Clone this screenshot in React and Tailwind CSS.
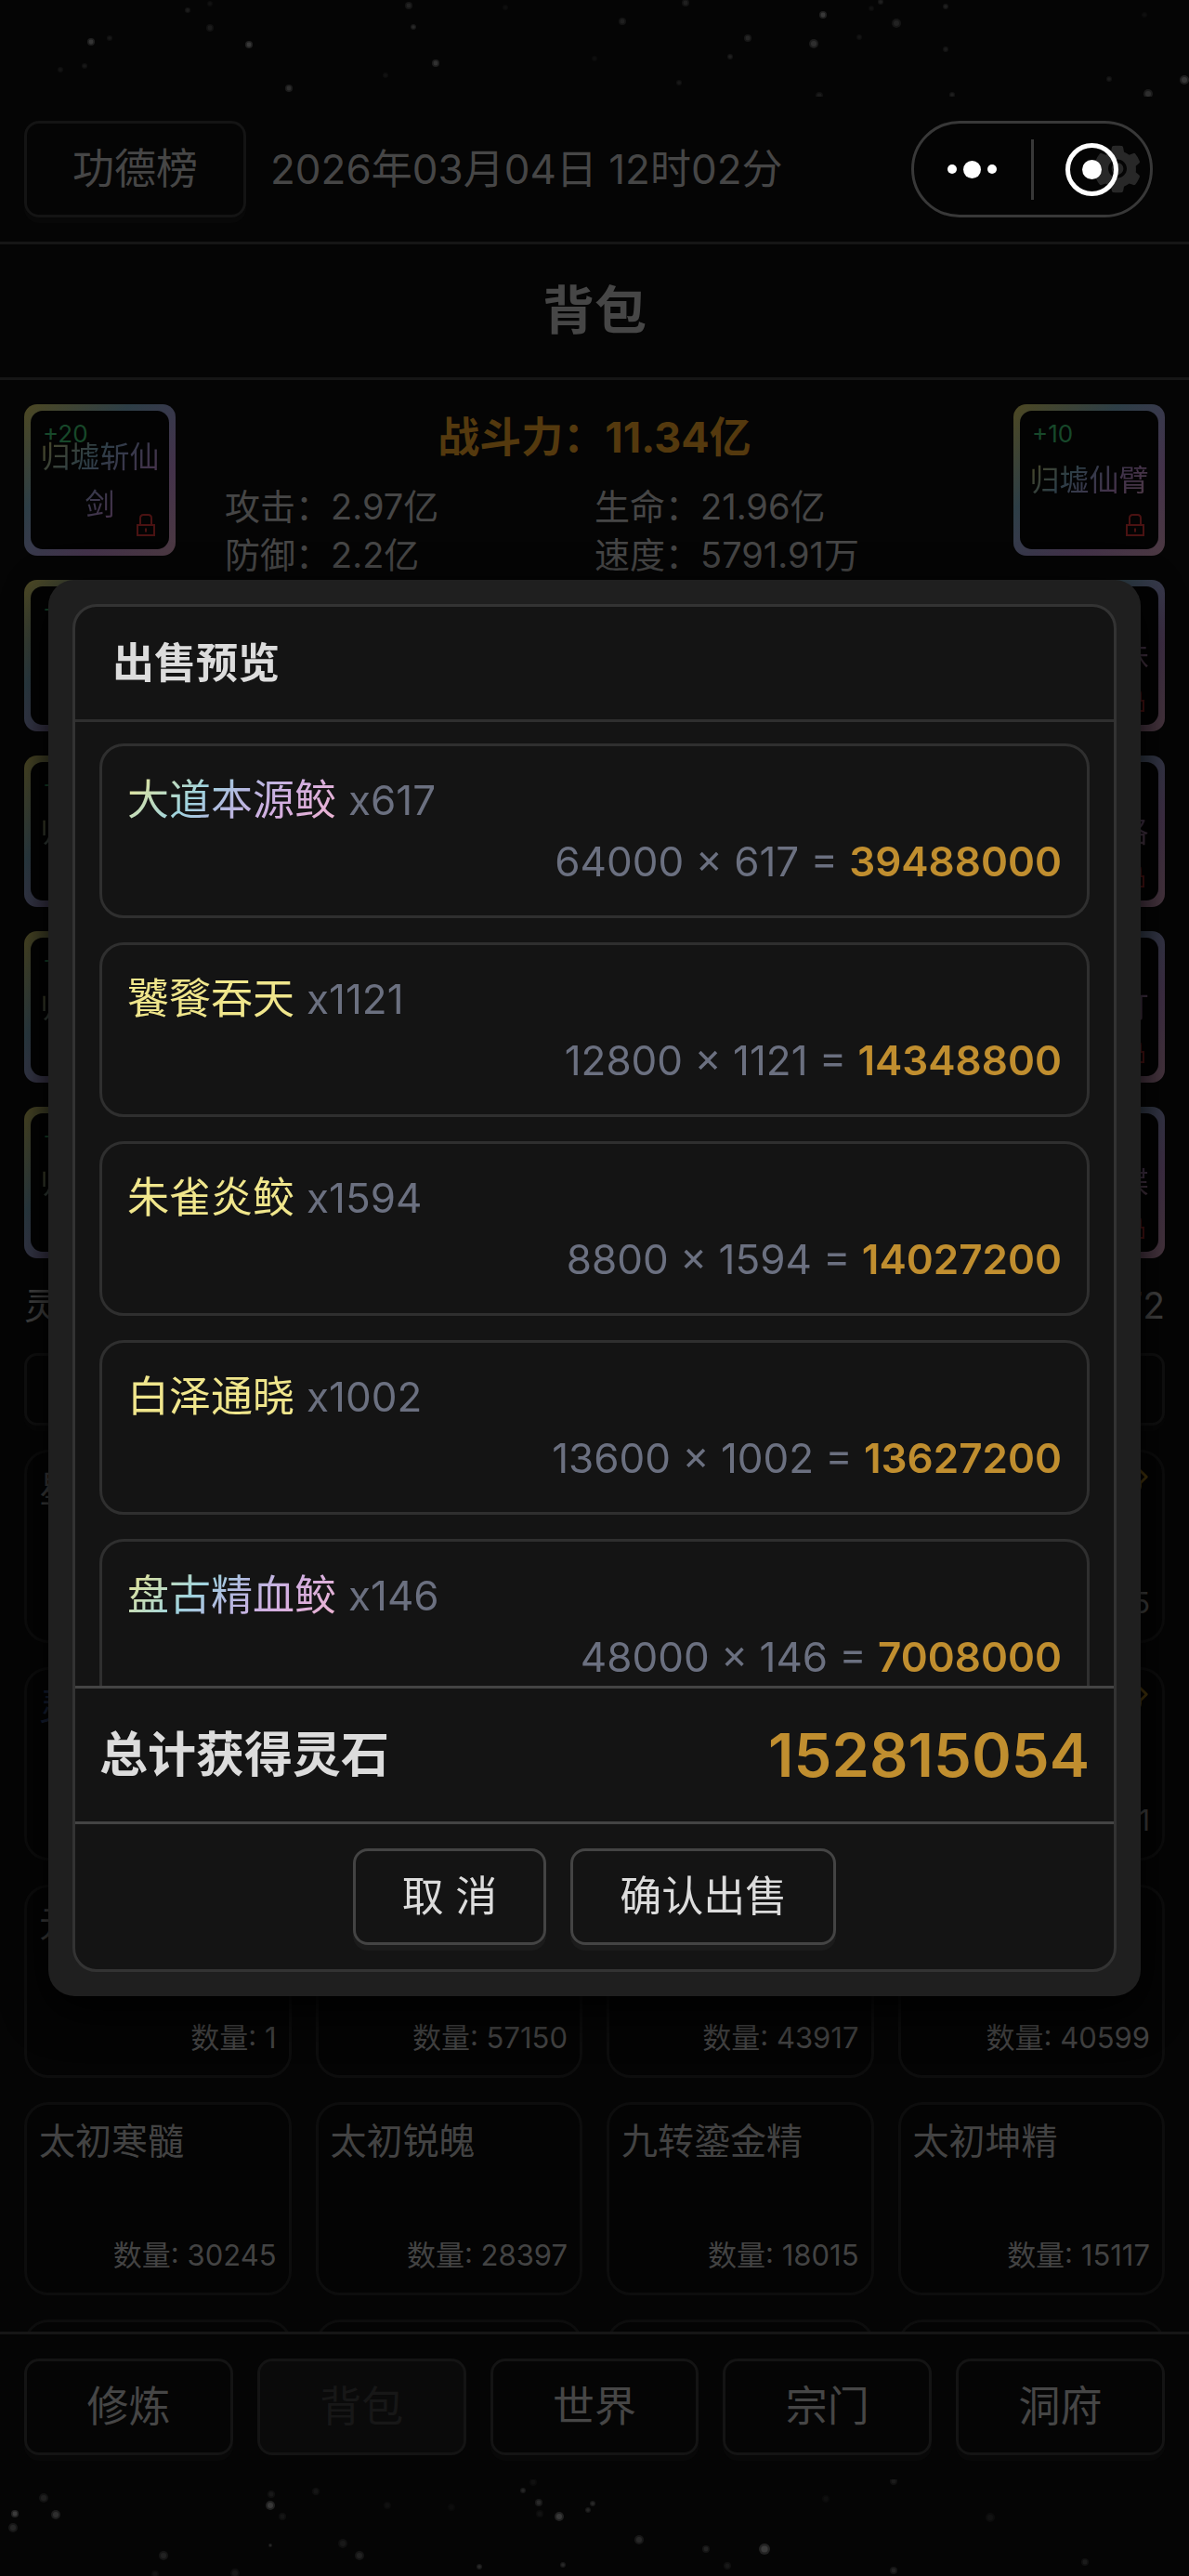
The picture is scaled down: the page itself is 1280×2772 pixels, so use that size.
import React, { useState } from "react";
import { AiFillSetting, AiOutlinePushpin } from "react-icons/ai";

const topStars = [
  [98, 45, 4, 0.3], [118, 41, 3, 0.12], [91, 71, 3, 0.12], [65, 75, 3, 0.1], [202, 11, 3, 0.15],
  [226, 4, 3, 0.08], [226, 30, 4, 0.14], [268, 48, 4, 0.32], [311, 95, 4, 0.26], [440, 6, 4, 0.18],
  [445, 29, 3, 0.22], [469, 68, 4, 0.28], [415, 81, 3, 0.08], [544, 8, 3, 0.06], [670, 23, 4, 0.16],
  [640, 63, 3, 0.06], [738, 3, 4, 0.16], [731, 89, 3, 0.12], [786, 61, 3, 0.16], [805, 41, 4, 0.2],
  [876, 47, 5, 0.26], [886, 16, 4, 0.32], [925, 40, 3, 0.1], [882, 103, 4, 0.14], [948, 2, 3, 0.16],
  [965, 25, 5, 0.18], [938, 9, 3, 0.08], [1018, 53, 3, 0.14], [1018, 7, 3, 0.16], [1025, 102, 3, 0.16],
  [1194, 85, 3, 0.14], [1236, 101, 5, 0.26], [1275, 86, 5, 0.3], [1232, 16, 3, 0.06],
];

const bottomStars = [
  [47, 20, 5, 0.16], [16, 37, 4, 0.34], [60, 38, 5, 0.26], [14, 52, 5, 0.2], [292, 16, 4, 0.12],
  [291, 28, 5, 0.32], [304, 40, 4, 0.1], [340, 13, 4, 0.1], [176, 82, 5, 0.18], [291, 71, 2, 0.2],
  [369, 69, 5, 0.12], [387, 82, 5, 0.18], [253, 101, 5, 0.12], [167, 102, 4, 0.08], [417, 28, 4, 0.07],
  [486, 30, 4, 0.05], [563, 12, 3, 0.2], [574, 3, 4, 0.07], [580, 25, 4, 0.22], [602, 40, 5, 0.32],
  [638, 26, 3, 0.22], [633, 33, 3, 0.2], [581, 37, 4, 0.08], [688, 65, 5, 0.22], [516, 94, 3, 0.22],
  [606, 92, 3, 0.22], [760, 75, 4, 0.18], [783, 93, 4, 0.12], [823, 75, 6, 0.34], [889, 21, 4, 0.06],
  [962, 2, 4, 0.14], [962, 98, 4, 0.18], [1066, 41, 5, 0.08], [1168, 89, 4, 0.14],
];

const leftGear = [
  { plus: "+20", name: "归墟斩仙剑" },
  { plus: "+10", name: "" },
  { plus: "+10", name: "归墟仙冠" },
  { plus: "+10", name: "归墟仙靴" },
  { plus: "+10", name: "归墟仙带" },
];

const rightGear = [
  { plus: "+10", name: "归墟仙臂" },
  { plus: "", name: "归墟仙珠" },
  { plus: "", name: "归墟仙珞" },
  { plus: "", name: "归墟仙灯" },
  { plus: "", name: "归墟仙蝶" },
];

const stats = [
  { label: "攻击", value: "2.97亿" },
  { label: "生命", value: "21.96亿" },
  { label: "防御", value: "2.2亿" },
  { label: "速度", value: "5791.91万" },
];

const bagItems = [
  { name: "星" },
  {},
  {},
  { count: 5, pinned: true },
  { name: "灵", color: "text-[#182238]" },
  {},
  {},
  { count: 1, pinned: true },
  { name: "元", count: 1 },
  { count: 57150 },
  { count: 43917 },
  { count: 40599 },
  { name: "太初寒髓", count: 30245 },
  { name: "太初锐魄", count: 28397 },
  { name: "九转鎏金精", count: 18015 },
  { name: "太初坤精", count: 15117 },
  {},
  {},
  {},
  {},
];

const sellItems = [
  { name: "大道本源鲛", count: 617, price: 64000, rainbow: true },
  { name: "饕餮吞天", count: 1121, price: 12800 },
  { name: "朱雀炎鲛", count: 1594, price: 8800 },
  { name: "白泽通晓", count: 1002, price: 13600 },
  { name: "盘古精血鲛", count: 146, price: 48000, rainbow: true },
];

const tabs = ["修炼", "背包", "世界", "宗门", "洞府"];

const Stars = ({ stars }) => (
  <svg viewBox="0 0 1280 104" className="block w-full shrink-0" aria-hidden="true">
    {stars.map(([x, y, r, o], i) => (
      <g key={i} fill="#fff" opacity={o * 0.7}>
        <circle cx={x} cy={y} r={r} opacity="0.5" />
        <circle cx={x} cy={y} r={r * 0.6} opacity="0.8" />
      </g>
    ))}
  </svg>
);

const LockIcon = () => (
  <svg viewBox="0 0 20 24" className="h-6 w-5" fill="none" stroke="currentColor" strokeWidth="2">
    <rect x="1" y="12" width="18" height="11" />
    <path d="M4 12V4.500Q4 1 7.500 1h5Q16 1 16 4.500V12M10 15.500v4" />
  </svg>
);

const GearSlot = ({ plus, name }) => (
  <div className="relative h-[163px] w-[163px] rounded-[14px] bg-[linear-gradient(135deg,#4d4822_0%,#2d3e46_35%,#37394b_50%,#43324a_70%,#4c3942_100%)] p-[7px]">
    <div className="flex h-full items-center justify-center rounded-[13px] bg-[#030303] px-2">
      <span className="bg-[linear-gradient(135deg,#4d4822_0%,#2d3e46_35%,#37394b_50%,#43324a_70%,#4c3942_100%)] bg-clip-text text-center text-[32px] leading-[51px] text-transparent">
        {name}
      </span>
    </div>
    <span className="absolute top-4 left-5 text-[26px] leading-8 text-[#17482a]">{plus}</span>
    <span className="absolute right-[22px] bottom-[21px] text-[#4a1212]">
      <LockIcon />
    </span>
  </div>
);

const BagCard = ({ name, count, color = "text-[#434343]", pinned }) => (
  <div className="relative flex h-[208px] flex-col justify-between rounded-[26px] border-[3px] border-[#0d0d0d] bg-[#040404] p-[13px]">
    <span className={`min-h-[52px] text-[39px] leading-[52px] ${color}`}>{name}</span>
    {count && (
      <span className="text-right text-[31px] leading-[54px] text-[#434343]">数量: {count}</span>
    )}
    {pinned && <AiOutlinePushpin className="absolute top-2.5 right-2.5 h-10 w-10 text-[#4a380d]" />}
  </div>
);

const SellRow = ({ item }) => (
  <li className="rounded-[26px] border-[3px] border-[#2f2f2f] px-[27px] py-[25px] text-[44px] leading-[66px] text-[#6b7080]">
    <div className="flex items-center gap-[13px]">
      <span
        className={`text-[45px] ${
          item.rainbow
            ? "bg-[linear-gradient(135deg,#f0e68c_0%,#9fd3de_35%,#b3b8e0_50%,#d3aee0_70%,#f0b4d0_100%)] bg-clip-text text-transparent"
            : "text-[#f0e68c]"
        }`}
      >
        {item.name}
      </span>
      <span>x{item.count}</span>
    </div>
    <div className="text-right">
      {item.price} × {item.count} ={" "}
      <span className="font-semibold text-[#c08e2f]">{item.price * item.count}</span>
    </div>
  </li>
);

const SellDialog = ({ onClose }) => (
  <div className="fixed inset-0 flex items-center justify-center px-[52px]">
    <div
      role="dialog"
      aria-labelledby="sell-title"
      className="w-full rounded-[28px] bg-[#1f1f1f] p-[26px] shadow-[0_16px_48px_#000]"
    >
      <div className="overflow-hidden rounded-[26px] border-[3px] border-[#333333] bg-[#141414] text-[#dcdcdc]">
        <h2
          id="sell-title"
          className="border-b-[3px] border-[#2f2f2f] px-10 py-7 text-[45px] leading-[65px] font-bold"
        >
          出售预览
        </h2>
        <ul className="flex max-h-[1037px] flex-col gap-[26px] overflow-hidden px-[26px] pt-[23px] *:shrink-0">
          {sellItems.map((item) => (
            <SellRow key={item.name} item={item} />
          ))}
        </ul>
        <div className="flex items-center justify-between border-y-[3px] border-[#444444] px-[26px] py-9 leading-[71px]">
          <span className="text-[52px] font-bold">总计获得灵石</span>
          <span className="text-[65px] font-semibold text-[#c08e2f]">152815054</span>
        </div>
        <div className="flex justify-center gap-[26px] py-[26px] text-[45px] leading-[98px]">
          <button
            onClick={onClose}
            className="rounded-2xl border-[3px] border-[#444444] px-[50px] shadow-[0_6px_0_#1b1b1b]"
          >
            取 消
          </button>
          <button
            onClick={onClose}
            className="rounded-2xl border-[3px] border-[#444444] px-[50px] shadow-[0_6px_0_#1b1b1b]"
          >
            确认出售
          </button>
        </div>
      </div>
    </div>
  </div>
);

const App = () => {
  const [activeTab, setActiveTab] = useState("背包");
  const [isSellOpen, setIsSellOpen] = useState(true);

  return (
    <div className="flex h-screen flex-col bg-[#050505] font-[Inter,'Noto_Sans_CJK_SC',sans-serif] text-[#464646]">
      <Stars stars={topStars} />

      {/* Header */}
      <header className="relative flex items-center gap-[26px] border-b-[3px] border-[#161616] px-[26px] py-[26px]">
        <button className="rounded-2xl border-[3px] border-[#141414] px-[49px] text-[45px] leading-[98px] shadow-[0_6px_0_#080808]">
          功德榜
        </button>
        <span className="grow text-[44px] leading-[66px]">2026年03月04日 12时02分</span>
        <button aria-label="设置" className="px-[22px]">
          <AiFillSetting className="h-[58px] w-[58px] text-[#333333]" />
        </button>
        {/* Mini program capsule */}
        <div className="absolute top-[26px] right-[39px] flex h-[104px] w-[260px] items-center rounded-full border-[3px] border-[#383838] bg-black/20">
          <button aria-label="更多" className="flex flex-1 items-center justify-center gap-[7px]">
            <span className="h-2.5 w-2.5 rounded-full bg-white" />
            <span className="h-[19px] w-[19px] rounded-full bg-white" />
            <span className="h-2.5 w-2.5 rounded-full bg-white" />
          </button>
          <span className="h-[65px] w-[3px] bg-[#383838]" />
          <button aria-label="关闭" className="flex flex-1 items-center justify-center">
            <span className="flex h-[57px] w-[57px] items-center justify-center rounded-full border-[5px] border-white">
              <span className="h-[21px] w-[21px] rounded-full bg-white" />
            </span>
          </button>
        </div>
      </header>

      <h1 className="border-b-[3px] border-[#161616] py-9 text-center text-[56px] leading-[71px] font-bold">
        背包
      </h1>

      {/* Bag contents */}
      <main className="min-h-0 grow overflow-hidden px-[26px] pt-[26px]">
        <div className="flex justify-between">
          <div className="flex flex-col gap-[26px]">
            {leftGear.map((gear, i) => (
              <GearSlot key={i} {...gear} />
            ))}
          </div>
          <div className="grow px-[53px]">
            <p className="py-1 text-center text-[45px] leading-[64px] font-bold text-[#54390e]">
              战斗力：11.34亿
            </p>
            <dl className="mt-3 grid grid-cols-2 text-[38px] leading-[52px]">
              {stats.map((stat) => (
                <div key={stat.label} className="flex">
                  <dt>{stat.label}：</dt>
                  <dd>{stat.value}</dd>
                </div>
              ))}
            </dl>
          </div>
          <div className="flex flex-col gap-[26px]">
            {rightGear.map((gear, i) => (
              <GearSlot key={i} {...gear} />
            ))}
          </div>
        </div>

        <div className="flex justify-between py-6 text-[39px] leading-[54px]">
          <span>灵石</span>
          <span>/72</span>
        </div>
        <input
          aria-label="搜索"
          className="block h-[78px] w-full rounded-[14px] border-[3px] border-[#111111] shadow-[0_6px_0_#070707]"
        />

        <div className="mt-[26px] grid grid-cols-4 gap-[26px]">
          {bagItems.map((item, i) => (
            <BagCard key={i} {...item} />
          ))}
        </div>
      </main>

      {/* Bottom tabs */}
      <nav className="grid grid-cols-5 gap-[26px] border-t-[3px] border-[#161616] p-[26px]">
        {tabs.map((tab) => (
          <button
            key={tab}
            onClick={() => setActiveTab(tab)}
            className={`rounded-2xl border-[3px] border-[#141414] text-[45px] leading-[98px] ${
              tab === activeTab ? "bg-[#0a0a0a] text-[#171717]" : "shadow-[0_6px_0_#080808]"
            }`}
          >
            {tab}
          </button>
        ))}
      </nav>
      <Stars stars={bottomStars} />

      {isSellOpen && <SellDialog onClose={() => setIsSellOpen(false)} />}
    </div>
  );
};

export default App;
